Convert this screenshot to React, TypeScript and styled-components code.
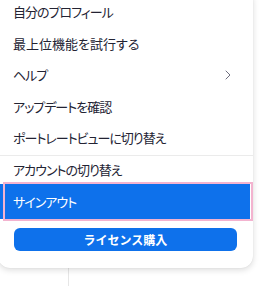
import React from "react";
import styled, { createGlobalStyle } from "styled-components";
import { ChevronRight } from "lucide-react";

const Global = createGlobalStyle`
  html, body { margin: 0; padding: 0; background: #ffffff; overflow: hidden; }
  body { font-family: "Noto Sans CJK JP", "Noto Sans", sans-serif; }
`;

const Page = styled.div`
  position: relative;
  width: 266px;
  height: 286px;
  display: flex;
  background: #ffffff;
`;

const Sidebar = styled.div`
  width: 68px;
  height: 100%;
  border-right: 1px solid #e6e6e6;
`;

const Menu = styled.div`
  position: absolute;
  top: -4px;
  left: -2px;
  width: 255px;
  padding-bottom: 17px;
  background: #ffffff;
  border-radius: 0 0 12px 12px;
  box-shadow: 0 2px 6px rgba(0, 0, 0, 0.14), 0 0 1px rgba(0, 0, 0, 0.12);
  display: flex;
  flex-direction: column;
`;

const Item = styled.div<{ $h?: number; $active?: boolean; $kana?: boolean }>`
  position: relative;
  height: ${(p) => p.$h ?? 31.5}px;
  display: flex;
  align-items: center;
  justify-content: space-between;
  padding: 0 17px 0 15px;
  margin-right: ${(p) => (p.$active ? 3 : 0)}px;
  font-size: 13px;
  font-feature-settings: "palt";
  letter-spacing: ${(p) => (p.$kana === false ? 0 : -1)}px;
  color: ${(p) => (p.$active ? "#ffffff" : "#232333")};
  background: ${(p) => (p.$active ? "#0e71eb" : "transparent")};
  ${(p) =>
    p.$active &&
    `
    &::after {
      content: "";
      position: absolute;
      top: -2px;
      bottom: -2px;
      left: 5px;
      right: -3px;
      border: 2px solid #f3b3cf;
      pointer-events: none;
    }
  `}
`;

const Divider = styled.div`
  height: 1px;
  margin-top: 1px;
  background: #ebebeb;
`;

const BuyButton = styled.button`
  margin: 9px 16px 0;
  height: 23px;
  border: none;
  border-radius: 6px;
  background: #0e71eb;
  color: #ffffff;
  font-family: "Noto Sans CJK JP", sans-serif;
  font-size: 12px;
  font-weight: 700;
  display: flex;
  align-items: center;
  justify-content: center;
  padding: 0;
`;

const Chevron = styled(ChevronRight)`
  color: #6e6e7e;
`;

export default function App() {
  return (
    <>
      <Global />
      <Page>
        <Sidebar />
        <Menu>
          <Item>自分のプロフィール</Item>
          <Item $kana={false}>最上位機能を試行する</Item>
          <Item>
            ヘルプ
            <Chevron size={16} strokeWidth={1.5} />
          </Item>
          <Item>アップデートを確認</Item>
          <Item>ポートレートビューに切り替え</Item>
          <Divider />
          <Item $h={28.5}>アカウントの切り替え</Item>
          <Item $h={35} $active>
            サインアウト
          </Item>
          <BuyButton>ライセンス購入</BuyButton>
        </Menu>
      </Page>
    </>
  );
}
